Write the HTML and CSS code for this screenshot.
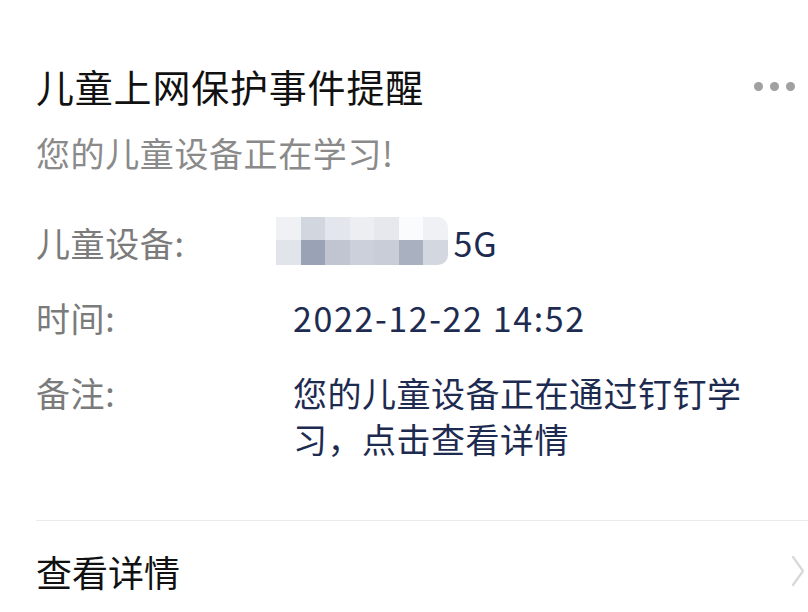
FILE: index.html
```html
<!DOCTYPE html>
<html lang="zh">
<head>
<meta charset="utf-8">
<link rel="stylesheet" href="styles.css">
</head>
<body>
<div class="card">
  <div class="head">
    <h1 class="title">儿童上网保护事件提醒</h1>
    <div class="more"><span></span><span></span><span></span></div>
  </div>
  <p class="sub">您的儿童设备正在学习!</p>
  <div class="rows">
    <div class="row">
      <div class="label">儿童设备:</div>
      <div class="value device">
        <div class="mosaic">
          <i style="background:#f0f1f4"></i><i style="background:#d2d6df"></i><i style="background:#e3e6ec"></i><i style="background:#eceef2"></i><i style="background:#e6e8ed"></i><i style="background:#fafbfc"></i><i style="background:#f0f1f4"></i>
          <i style="background:#e1e4ea"></i><i style="background:#9aa3b6"></i><i style="background:#c0c5d1"></i><i style="background:#cbd0da"></i><i style="background:#c8cdd7"></i><i style="background:#a9b0c0"></i><i style="background:#d3d7e0"></i>
        </div>
        <span class="ssid">5G</span>
      </div>
    </div>
    <div class="row">
      <div class="label">时间:</div>
      <div class="value date">2022-12-22 14:52</div>
    </div>
    <div class="row">
      <div class="label">备注:</div>
      <div class="value note">您的儿童设备正在通过钉钉学习，点击查看详情</div>
    </div>
  </div>
  <div class="footer">
    <span class="link">查看详情</span>
    <svg class="chev" width="16" height="34" viewBox="0 0 16 34"><path d="M3 3 L13 17 L3 31" fill="none" stroke="#d8d8d8" stroke-width="2.2" stroke-linecap="round" stroke-linejoin="round"/></svg>
  </div>
</div>
</body>
</html>
```
FILE: styles.css
```css
html, body {
  margin: 0;
  padding: 0;
  background: #ffffff;
}
body {
  width: 808px;
  height: 612px;
  overflow: hidden;
  font-family: "Noto Sans CJK SC", "Noto Sans", sans-serif;
}
.card {
  padding: 60px 0 0 36px;
}
.head {
  display: flex;
  align-items: center;
  justify-content: space-between;
  height: 52px;
}
.title {
  margin: 0;
  font-size: 38px;
  font-weight: 400;
  color: #111111;
  line-height: 52px;
  letter-spacing: 0.8px;
}
.more {
  display: flex;
  gap: 7px;
  margin-right: 13px;
  margin-top: 0;
}
.more span {
  width: 9px;
  height: 9px;
  border-radius: 50%;
  background: #a0a0a0;
}
.sub {
  margin: 18px 0 0 0;
  font-size: 34px;
  line-height: 46px;
  color: #8a8a8a;
  letter-spacing: 0.6px;
}
.rows {
  margin-top: 44px;
  display: flex;
  flex-direction: column;
  gap: 29px;
}
.row {
  display: flex;
  min-height: 46px;
}
.label {
  width: 257px;
  flex: none;
  font-size: 34px;
  line-height: 46px;
  color: #7b7b7b;
  letter-spacing: 0.6px;
}
.value {
  font-size: 34px;
  line-height: 46px;
  color: #1e2b50;
  width: 460px;
  letter-spacing: 0.5px;
}
.date {
  letter-spacing: 1.6px;
}
.device {
  display: flex;
  align-items: center;
}
.mosaic {
  display: grid;
  grid-template-columns: repeat(7, 24.5px);
  grid-template-rows: 23px 25px;
  margin-left: -17px;
  margin-top: -5px;
  border-radius: 0 10px 10px 0;
  overflow: hidden;
}
.mosaic i {
  display: block;
}
.ssid {
  margin-left: 6px;
  letter-spacing: 1px;
}
.footer {
  margin-top: 58px;
  border-top: 1.5px solid #ebebeb;
  display: flex;
  align-items: center;
  justify-content: space-between;
  height: 100px;
}
.link {
  font-size: 36px;
  color: #111111;
  line-height: 46px;
}
.chev {
  margin-right: 2px;
}
```
